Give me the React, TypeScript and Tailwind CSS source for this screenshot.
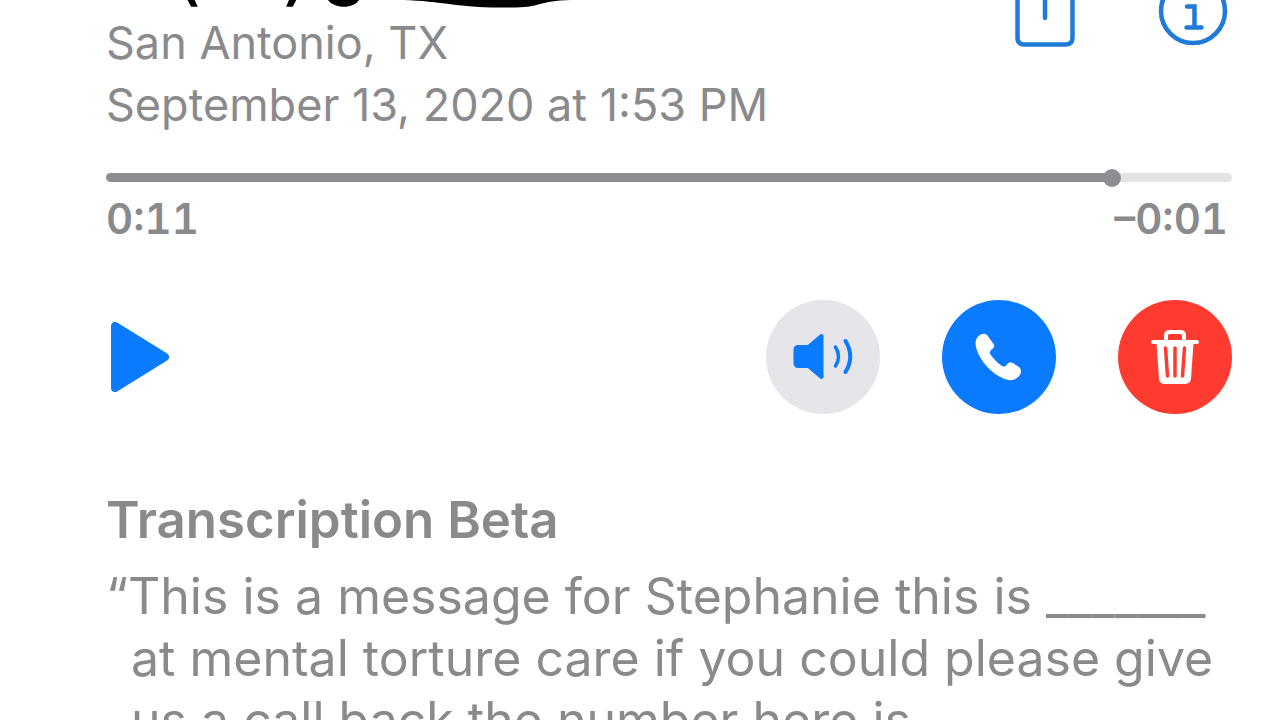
import { useState } from 'react';

function ShareIcon() {
  return (
    <svg className="w-[60px] h-12" viewBox="0 0 60 48" fill="none" stroke="currentColor" strokeWidth="4.500" strokeLinecap="round">
      <path d="M2.500 -6V37.500Q2.500 44.500 9.500 44.500H50.500Q57.500 44.500 57.500 37.500V-6" />
      <path d="M30 -6V18" />
    </svg>
  );
}

function InfoIcon() {
  return (
    <svg className="w-[70px] h-12" viewBox="0 0 70 48" fill="none" stroke="currentColor" strokeWidth="4.500" strokeLinecap="round">
      <circle cx="35" cy="11" r="32" />
      <path d="M29 6.500H36.500V27M28.500 27.500H43.500" />
    </svg>
  );
}

function PlayIcon() {
  return (
    <svg className="w-[60px] h-[72px]" viewBox="0 0 60 72" fill="currentColor" stroke="currentColor" strokeWidth="8" strokeLinejoin="round">
      <path d="M5 5V67L55 36Z" />
    </svg>
  );
}

function SpeakerIcon() {
  return (
    <svg className="w-[60px] h-12" viewBox="0 0 60 48" fill="none" stroke="currentColor" strokeLinecap="round" strokeLinejoin="round">
      <path d="M2.500 17Q2.500 14 5.500 14H15.500L28.500 3V44L15.500 33H5.500Q2.500 33 2.500 30Z" fill="currentColor" strokeWidth="4" />
      <path d="M42.500 14Q48.500 23.500 42.500 33" strokeWidth="3.500" />
      <path d="M52.500 8Q62 23.500 52.500 39" strokeWidth="4" />
    </svg>
  );
}

function PhoneIcon() {
  return (
    <svg className="w-12 h-[50px]" viewBox="0 0 48 50" fill="currentColor">
      <path d="M3 4.500C6 1.500 10 0.500 12.500 3.500L18.500 12C20 14 19 16 16.500 17.500C15 19 14.500 20.500 15.500 22.500C18.500 27 23 31.500 27 34C29 35 30.500 34.500 31.500 33C33.500 30 35.500 29.500 38 31L44.500 35.500C47 38 46.500 42 43 45C39.500 48.500 34.500 49 29.500 47C17 42 5 29 1.500 17C0 12 0 8 3 4.500Z" />
    </svg>
  );
}

function TrashIcon() {
  return (
    <svg className="w-12 h-14" viewBox="0 0 48 56" fill="none" stroke="currentColor" strokeLinecap="round" strokeLinejoin="round">
      <path d="M2 13H46" strokeWidth="4" />
      <path d="M15 12V6.500Q15 3 18.500 3H29.500Q33 3 33 6.500V12" strokeWidth="4" />
      <path d="M7.500 14L10 49.500Q10.200 53 14 53H34Q37.800 53 38 49.500L40.500 14Z" fill="currentColor" strokeWidth="4" />
      <path d="M14.500 19L16.500 47M24 19V47M33.500 19L31.500 47" stroke="#ff3b30" strokeWidth="3.500" />
    </svg>
  );
}

export default function App() {
  const [position, setPosition] = useState(90);
  const filled = `linear-gradient(to right, #8e8d92 ${position}%, #e4e4e5 ${position}%)`;

  return (
    <main className="h-screen overflow-hidden bg-white pl-[106px] pr-12 font-['Inter',sans-serif] text-[#8a8a8d]">
      <header className="flex justify-between">
        <div>
          <div className="relative flex h-3 items-end gap-[84px] overflow-hidden pl-[73px] text-[56px] leading-[62px] font-semibold text-black">
            <span className="mb-0.5">(</span>
            <span className="mb-0.5">)</span>
            <svg className="absolute left-0 top-0 h-[11px] w-[480px]" viewBox="0 0 480 11" fill="currentColor">
              <path d="M222 0H253C248 9 228 9 222 0Z" />
              <path d="M290 0C330 0 350 7 385 7.500H410C435 7 432 1 465 0Z" />
            </svg>
          </div>
          <p className="text-[45px] leading-[62px]">San Antonio, TX</p>
          <p className="text-[45px] leading-[62px]">September 13, 2020 at 1:53 PM</p>
        </div>
        <div className="flex items-start gap-[83px] pr-1 text-[#1f7ad8]">
          <button type="button" aria-label="Share"><ShareIcon /></button>
          <button type="button" aria-label="Info"><InfoIcon /></button>
        </div>
      </header>

      <section className="mt-[37px]">
        <input
          type="range"
          aria-label="Playback position"
          min={0}
          max={100}
          value={position}
          onChange={(e) => setPosition(Number(e.target.value))}
          style={{ backgroundImage: filled }}
          className="block h-[9px] w-full appearance-none rounded-full [&::-webkit-slider-thumb]:size-[18px] [&::-webkit-slider-thumb]:appearance-none [&::-webkit-slider-thumb]:rounded-full [&::-webkit-slider-thumb]:bg-[#8e8d92]"
        />
        <div className="mt-3 flex justify-between pr-1 text-[42px] leading-[50px] font-semibold tabular-nums">
          <span>0:11</span>
          <span>–0:01</span>
        </div>
      </section>

      <section className="mt-14 flex items-center justify-between">
        <button type="button" aria-label="Play" className="pl-1 text-[#0a7aff]"><PlayIcon /></button>
        <div className="flex gap-[62px]">
          <button type="button" aria-label="Speaker" className="flex size-[114px] items-center justify-center rounded-full bg-[#e5e5ea] text-[#0a7aff]">
            <SpeakerIcon />
          </button>
          <button type="button" aria-label="Call back" className="flex size-[114px] items-center justify-center rounded-full bg-[#0a7aff] text-white">
            <PhoneIcon />
          </button>
          <button type="button" aria-label="Delete" className="flex size-[114px] items-center justify-center rounded-full bg-[#ff3b30] text-white">
            <TrashIcon />
          </button>
        </div>
      </section>

      <section className="mt-[75px]">
        <h2 className="text-[51px] leading-[62px] font-semibold">Transcription Beta</h2>
        <p className="mt-[14px] pl-[25px] -indent-[25px] text-[50px] leading-[62px] whitespace-nowrap">
          “This is a message for Stephanie this is _______
          <br />
          <span className="inline-block indent-0">at mental torture care if you could please give</span>
          <br />
          <span className="inline-block indent-0">us a call back the number here is</span>
        </p>
      </section>
    </main>
  );
}
